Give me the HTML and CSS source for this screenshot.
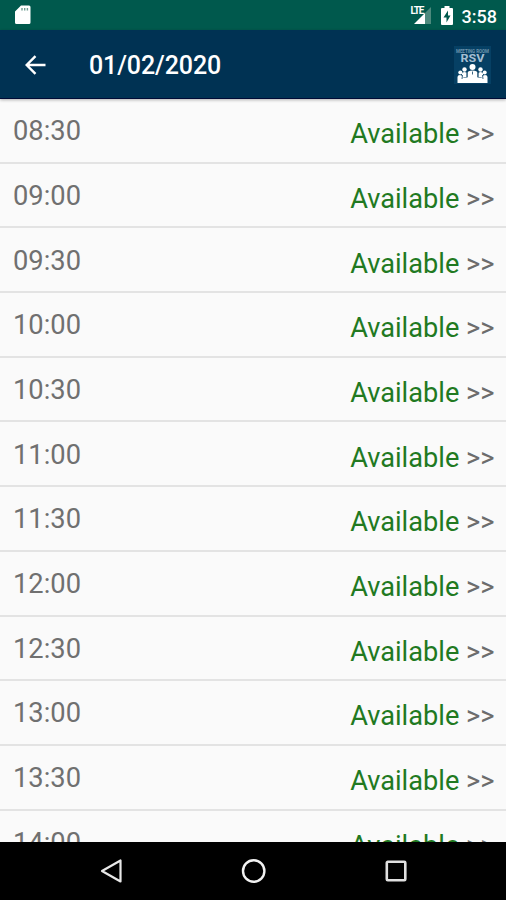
FILE: index.html
```
<!DOCTYPE html>
<html lang="en">
<head>
<meta charset="utf-8">
<title>01/02/2020</title>
<link rel="stylesheet" href="styles.css">
</head>
<body>
<div class="screen">
  <header class="status">
    <svg class="sd" width="16" height="20" viewBox="0 0 16 20"><path fill="#fff" d="M6 .5h8a1.500 1.500 0 0 1 1.500 1.500v15.500a1.500 1.500 0 0 1-1.500 1.500h-12.500a1.500 1.500 0 0 1-1.500-1.500v-11z"/><path stroke="#6f9d92" stroke-width="1.400" d="M7 3v2.500M9.700 3v2.500M12.400 3v2.500"/></svg>
    <div class="indicators">
      <div class="signal">
        <svg width="23" height="20" viewBox="0 0 23 20"><path fill="#4d8a7d" d="M22 2v17h-6V8z"/><path fill="#fff" d="M16 8v11H5z"/></svg>
        <span class="lte">LTE</span>
      </div>
      <svg class="battery" width="12" height="19" viewBox="0 0 12 19"><path fill="#fff" d="M3.500 0h5v2H11a1 1 0 0 1 1 1v15a1 1 0 0 1-1 1H1a1 1 0 0 1-1-1V3a1 1 0 0 1 1-1h2.500z"/><path fill="#00594d" d="M7 4.500 2.500 11.500h3V16.500L9.500 9.500H7z"/></svg>
      <span class="clock">3:58</span>
    </div>
  </header>
  <nav class="appbar">
    <svg class="back" width="22" height="20" viewBox="0 0 22 20"><path fill="none" stroke="#fff" stroke-width="2.400" d="M20.500 10H2.500M10.500 1.200 1.700 10l8.800 8.800"/></svg>
    <h1 class="title">01/02/2020</h1>
    <svg class="logo" width="37" height="38" viewBox="0 0 37 38">
      <rect width="37" height="38" fill="#064064"/>
      <text class="logo-small" x="18.500" y="6.500" text-anchor="middle" textLength="33" lengthAdjust="spacingAndGlyphs">MEETING ROOM</text>
      <text class="logo-big" x="18.500" y="16" text-anchor="middle" textLength="24" lengthAdjust="spacingAndGlyphs">RSV</text>
      <g fill="#fff">
        <circle cx="18.500" cy="21" r="3"/>
        <path d="M13.500 32v-5q0-2.500 5-2.500t5 2.500v5z"/>
        <circle cx="10.500" cy="23.500" r="2.200"/><circle cx="26.500" cy="23.500" r="2.200"/>
        <path d="M8 31v-3.500q0-1.500 2.500-1.500t2 1.500V31zM24.500 31v-3.500q0-1.500 2-1.500t2.500 1.500V31z"/>
        <circle cx="6.300" cy="26.500" r="2"/><circle cx="30.700" cy="26.500" r="2"/>
        <path d="M3.500 37v-6q0-2 2.500-2t3.500 2.500h18q1-2.500 3.500-2.500t2.500 2v6z"/>
      </g>
      <path stroke="#3a6583" stroke-width="1" d="M13.200 26v5M23.800 26v5M8.500 29l-.5 4M28.500 29l.5 4M18.500 25.500v3"/>
    </svg>
  </nav>
  <main class="slots">
    <div class="slot"><span class="time">08:30</span><span class="state">Available <i>&gt;&gt;</i></span></div>
    <div class="slot"><span class="time">09:00</span><span class="state">Available <i>&gt;&gt;</i></span></div>
    <div class="slot"><span class="time">09:30</span><span class="state">Available <i>&gt;&gt;</i></span></div>
    <div class="slot"><span class="time">10:00</span><span class="state">Available <i>&gt;&gt;</i></span></div>
    <div class="slot"><span class="time">10:30</span><span class="state">Available <i>&gt;&gt;</i></span></div>
    <div class="slot"><span class="time">11:00</span><span class="state">Available <i>&gt;&gt;</i></span></div>
    <div class="slot"><span class="time">11:30</span><span class="state">Available <i>&gt;&gt;</i></span></div>
    <div class="slot"><span class="time">12:00</span><span class="state">Available <i>&gt;&gt;</i></span></div>
    <div class="slot"><span class="time">12:30</span><span class="state">Available <i>&gt;&gt;</i></span></div>
    <div class="slot"><span class="time">13:00</span><span class="state">Available <i>&gt;&gt;</i></span></div>
    <div class="slot"><span class="time">13:30</span><span class="state">Available <i>&gt;&gt;</i></span></div>
    <div class="slot"><span class="time">14:00</span><span class="state">Available <i>&gt;&gt;</i></span></div>
  </main>
  <footer class="navbar">
    <svg width="24" height="26" viewBox="0 0 24 26"><path fill="none" stroke="#e8e8e8" stroke-width="2.200" stroke-linejoin="round" d="M20.500 2.500v21L2 13z"/></svg>
    <svg width="26" height="26" viewBox="0 0 26 26"><circle cx="12.700" cy="13" r="10.700" fill="none" stroke="#f2f2f2" stroke-width="2.400"/></svg>
    <svg width="24" height="26" viewBox="0 0 24 26"><rect x="2.800" y="3.800" width="18.500" height="18.500" rx="1" fill="none" stroke="#e0e0e0" stroke-width="2.600"/></svg>
  </footer>
</div>
</body>
</html>
```

FILE: styles.css
```
* { box-sizing: border-box; }
body { margin: 0; font-family: Roboto, "Liberation Sans", sans-serif; }
svg { display: block; flex: none; }
.screen { width: 506px; height: 900px; display: flex; flex-direction: column; overflow: hidden; background: #fafafa; }
.status { height: 30px; flex: none; background: #00594d; display: flex; justify-content: space-between; padding: 5px 9px 0 15px; }
.indicators { display: flex; }
.signal { position: relative; margin-right: 9px; }
.lte { position: absolute; left: 2px; top: 1px; font-size: 10px; line-height: 10px; font-weight: 700; color: #fff; letter-spacing: -1.200px; }
.battery { margin: 1px 9px 0 0; }
.clock { color: #fff; font-size: 18px; line-height: 23px; font-weight: 500; }
.appbar { height: 69px; flex: none; background: #003253; border-bottom: 1px solid #000b35; display: flex; align-items: center; padding: 1px 15px 0 25px; position: relative; box-shadow: 0 1px 3px rgba(0, 0, 0, .3); }
.title { margin: 0 auto 0 42px; padding-top: 3px; font-size: 25px; line-height: 30px; font-weight: 500; letter-spacing: -0.1px; color: #fff; }
.logo-small { font-size: 5px; font-weight: 700; fill: #6f94ae; }
.logo-big { font-size: 11px; font-weight: 700; fill: #a5bfd2; }
.slots { flex: 1; min-height: 0; overflow: hidden; }
.slot { height: 64.700px; border-bottom: 2px solid #e3e3e3; display: flex; justify-content: space-between; padding: 0 11.500px 0 13px; line-height: 32px; font-size: 27.300px; color: #707070; }
.time { padding-top: 16.300px; }
.state { padding-top: 19.300px; color: #217921; font-size: 27.200px; }
.state i { font-style: normal; color: #6c6c6c; }
.navbar { height: 58px; flex: none; background: #000; display: flex; justify-content: space-between; align-items: center; padding: 0 98px 0 100px; }
```
